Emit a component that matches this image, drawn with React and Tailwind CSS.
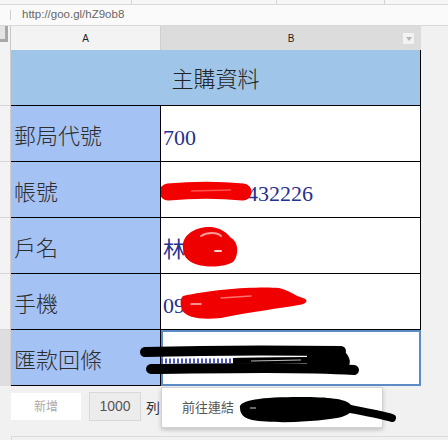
import React from "react";

const serif = { fontFamily: '"Liberation Serif", "Noto Sans CJK TC", serif' };

function Row({ label, children, last, overlay }) {
  return (
    <div className="relative flex h-[56px]">
      <div
        className="w-[150px] h-full bg-[#a4c2f4] border-r border-b border-black flex items-center pl-[3px] pt-[7px] text-[22px] font-light leading-none text-[#2d2d2d]"
        style={serif}
      >
        {label}
      </div>
      <div
        className={
          last
            ? "relative w-[260px] h-full bg-white border-2 border-[#5b8cc8]"
            : "relative w-[260px] h-full bg-white border-r border-b border-black flex items-center pl-[2px] pt-[8px] text-[22px] leading-none text-[#26308f]"
        }
        style={serif}
      >
        {children}
      </div>
      {overlay}
    </div>
  );
}

export default function App() {
  return (
    <div
      className="w-[448px] h-[440px] overflow-hidden bg-[#f1f1f1] flex flex-col"
      style={{ fontFamily: '"Liberation Sans", "Noto Sans CJK TC", sans-serif' }}
    >
      {/* toolbar edge */}
      <div className="h-[4px] bg-[#f6f6f6] flex">
        <div className="w-[132px] border-r border-[#d4d4d4]" />
        <div className="w-[145px] border-r border-[#d4d4d4]" />
        <div className="w-[108px] border-r border-[#d4d4d4]" />
      </div>

      {/* formula bar */}
      <div className="h-[22px] bg-[#fafafa] border-b border-t border-[#d9d9d9] flex items-center">
        <div className="ml-[10px] w-px h-[10px] bg-[#cfcfcf]" />
        <span className="ml-[11px] text-[11.5px] text-[#666]">http://goo.gl/hZ9ob8</span>
      </div>

      {/* column headers */}
      <div className="h-[24px] flex">
        <div className="w-[11px] h-full bg-[#f3f3f3] border-r border-[#c8c8c8]">
          <div className="w-[8px] h-[16px] bg-[#e4e4e4] border-r-[3px] border-b-[3px] border-[#a8a8a8]" />
        </div>
        <div className="w-[150px] h-full bg-[#f3f3f3] border-r border-[#d0d0d0] flex items-center justify-center text-[10px] text-[#222]">
          A
        </div>
        <div className="relative w-[260px] h-full bg-[#dcdcdc] flex items-center justify-center text-[10px] text-[#222]">
          B
          <div className="absolute right-[7px] top-[7px] w-[11px] h-[11px] bg-[#f2f2f2] flex items-center justify-center">
            <div className="w-0 h-0 border-l-[3px] border-r-[3px] border-t-[4px] border-l-transparent border-r-transparent border-t-[#b5b5b5]" />
          </div>
        </div>
      </div>

      {/* sheet body */}
      <div className="flex">
        <div className="w-[11px] flex flex-col bg-[#f3f3f3] border-r border-[#d0d0d0]">
          <div className="h-[56px] border-b border-[#d6d6d6]" />
          <div className="h-[56px] border-b border-[#d6d6d6]" />
          <div className="h-[56px] border-b border-[#d6d6d6]" />
          <div className="h-[56px] border-b border-[#d6d6d6]" />
          <div className="h-[56px] border-b border-[#d6d6d6]" />
          <div className="h-[56px] bg-[#dedede]" />
        </div>

        <div className="flex flex-col">
          <div
            className="h-[56px] w-[410px] bg-[#9fc5e8] border-r border-b border-black flex items-center justify-center pt-[4px] text-[22px] font-light text-[#222] leading-none"
            style={serif}
          >
            主購資料
          </div>

          <Row label="郵局代號">700</Row>

          <Row label="帳號">
            <span className="pl-[84px]">432226</span>
            <svg className="absolute left-0 top-0" width="100" height="56">
              <path d="M7 30 C30 28 60 28 82 30" stroke="#f20000" strokeWidth="17" strokeLinecap="round" fill="none" />
              <path d="M30 29 L70 28" stroke="#ff5050" strokeWidth="1.5" fill="none" />
            </svg>
          </Row>

          <Row label="戶名">
            <span>林</span>
            <svg className="absolute left-0 top-0" width="100" height="56">
              <path
                d="M22 30 C20 18 34 8 50 9 C60 10 66 15 70 20 C78 24 78 38 72 44 C62 50 40 50 30 44 C24 40 22 36 22 30 Z"
                fill="#ef0000"
              />
              <path d="M40 18 C46 14 56 14 60 18" stroke="#ff9a9a" strokeWidth="2" fill="none" strokeLinecap="round" />
              <path d="M54 33 L60 33" stroke="#ffd0d0" strokeWidth="2" strokeLinecap="round" />
            </svg>
          </Row>

          <Row label="手機">
            <span>09</span>
            <svg className="absolute left-0 top-0" width="160" height="56">
              <path
                d="M22 22 C50 15 100 12 118 14 C128 16 134 22 142 24 C148 26 146 30 138 31 C120 34 90 38 60 44 C40 46 26 44 21 36 C19 30 19 25 22 22 Z"
                fill="#f00000"
              />
              <path d="M30 30 L40 30" stroke="#ffc0c0" strokeWidth="1.5" strokeLinecap="round" />
              <path d="M60 24 L90 22" stroke="#ff7070" strokeWidth="1.5" strokeLinecap="round" />
            </svg>
          </Row>

          <Row
            label="匯款回條"
            last
            overlay={
              <svg className="absolute left-0 top-0" width="360" height="56">
                <path d="M134 22 C200 20 260 20 330 21" stroke="#000" strokeWidth="10" strokeLinecap="round" fill="none" />
                <path d="M140 39 C220 38 290 37 343 40" stroke="#000" strokeWidth="10" strokeLinecap="round" fill="none" />
                <path d="M296 24 C306 14 326 15 334 22 C342 30 340 40 328 40 L296 38 Z" fill="#000" />
                <path d="M150 31 L222 31" stroke="#4a55c8" strokeWidth="5" strokeDasharray="2 2" fill="none" />
                <path d="M222 31 C250 30 270 30 300 30" stroke="#000" strokeWidth="6" fill="none" />
                <path d="M240 31 L290 30" stroke="#bbb" strokeWidth="1" fill="none" />
              </svg>
            }
          />
        </div>
      </div>

      {/* bottom controls */}
      <div className="relative flex-1 flex flex-col">
        <div className="flex items-start pt-[7px] pl-[11px] h-[50px]">
          <div className="w-[70px] h-[27px] bg-white flex items-center justify-center text-[12px] text-[#aaa]">
            新增
          </div>
          <div className="ml-[8px] w-[52px] h-[29px] -mt-[1px] bg-[#ececec] border border-[#d8d8d8] flex items-center justify-center text-[14px] text-[#555]">
            1000
          </div>
          <span className="ml-[5px] mt-[5px] text-[14px] text-[#333]">列:</span>
        </div>
        <div className="ml-[11px] border-t border-[#dadada] flex-1 border-l w-[437px]" />

        <div className="absolute left-[161px] top-[1px] w-[222px] h-[41px] bg-white border border-[#d4d4d4] rounded-b-[2px] shadow-[0_2px_4px_rgba(0,0,0,0.2)] flex items-center pl-[20px] text-[13px] text-[#555]">
          前往連結
        </div>
        <svg className="absolute left-0 top-0" width="448" height="54">
          <path
            d="M240 22 C238 14 262 11 300 11 C330 11 345 13 350 18 C356 24 350 31 330 33 C300 37 270 37 252 34 C243 32 240 27 240 22 Z"
            fill="#000"
          />
          <path d="M340 21 C360 25 378 28 392 32" stroke="#000" strokeWidth="8" strokeLinecap="round" fill="none" />
          <path d="M250 22 L256 22" stroke="#888" strokeWidth="1.5" />
        </svg>
      </div>
    </div>
  );
}
